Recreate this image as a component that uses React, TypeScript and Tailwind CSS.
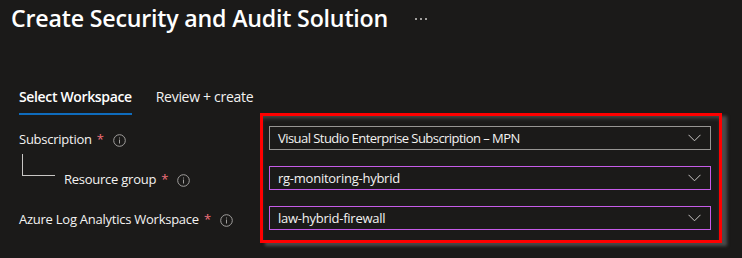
import React from 'react';

const fontStack = { fontFamily: '"Open Sans", "Noto Sans", sans-serif' };

const InfoIcon = () => (
    <svg width="13" height="13" viewBox="0 0 13 13" className="shrink-0">
        <circle cx="6.5" cy="6.5" r="5.8" fill="none" stroke="#a19f9d" strokeWidth="1" />
        <rect x="6" y="5.5" width="1" height="4" fill="#a19f9d" />
        <rect x="6" y="3.5" width="1" height="1" fill="#a19f9d" />
    </svg>
);

const Chevron = () => (
    <svg width="13" height="8" viewBox="0 0 13 8" className="shrink-0">
        <path d="M0.5 0.8 L6.5 6.8 L12.5 0.8" fill="none" stroke="#c8c6c4" strokeWidth="1" />
    </svg>
);

const Required = () => <span className="text-[#f1707b] ml-[5px]">*</span>;

const Dropdown = ({ value, active, tight }: { value: string; active?: boolean; tight?: boolean }) => (
    <div
        className={`flex items-center justify-between h-[24px] pl-[8px] pr-[9px] border ${
            active ? 'border-[#c55ce8]' : 'border-[#979593]'
        }`}
    >
        <span className={`text-[13px] text-[#f3f2f1] leading-none ${tight ? 'tracking-[-0.55px]' : 'tracking-[-0.25px]'}`}>
            {value}
        </span>
        <Chevron />
    </div>
);

export default function App() {
    return (
        <div className="w-[742px] h-[258px] bg-[#1b1a19] text-[#f3f2f1] overflow-hidden" style={fontStack}>
            {/* Header */}
            <div className="flex items-center pl-[11px] pt-[2px] h-[34px]">
                <h1 className="text-[23.2px] font-semibold leading-[32px] tracking-[-0.2px] text-white">
                    Create Security and Audit Solution
                </h1>
                <div className="flex gap-[3px] ml-[27px] mt-[2px]">
                    <span className="w-[2px] h-[2px] bg-[#a19f9d]" />
                    <span className="w-[2px] h-[2px] bg-[#a19f9d]" />
                    <span className="w-[2px] h-[2px] bg-[#a19f9d]" />
                </div>
            </div>

            {/* Tabs */}
            <div className="flex gap-[24px] pl-[19px] mt-[53px]">
                <div className="flex flex-col">
                    <span className="text-[14px] font-semibold leading-[20px] tracking-[-0.35px] text-white">Select Workspace</span>
                    <span className="mt-[6px] h-[2px] bg-[#0f6cbd]" />
                </div>
                <span className="text-[14px] leading-[20px] tracking-[-0.3px] text-[#f3f2f1]">Review + create</span>
            </div>

            {/* Form */}
            <div className="flex mt-[-2px]">
                <div className="w-[260px] flex flex-col gap-[16px] pt-[15px] pl-[19px] text-[13px] tracking-[-0.25px]">
                    <div className="h-[24px] flex items-center">
                        <span>Subscription</span>
                        <Required />
                        <span className="ml-[9px]"><InfoIcon /></span>
                    </div>
                    <div className="h-[24px] flex items-center relative">
                        <div className="absolute left-[3px] top-[-14px] w-[33px] h-[22px] border-l border-b border-[#c8c6c4]" />
                        <span className="ml-[45px]">Resource group</span>
                        <Required />
                        <span className="ml-[9px]"><InfoIcon /></span>
                    </div>
                    <div className="h-[24px] flex items-center">
                        <span>Azure Log Analytics Workspace</span>
                        <Required />
                        <span className="ml-[9px]"><InfoIcon /></span>
                    </div>
                </div>
                <div className="w-[462px] border-[3px] border-[#ff0000] pt-[10px] pb-[10px] pl-[6px] pr-[8px] flex flex-col gap-[16px] shadow-[inset_0_4px_4px_-2px_rgba(110,110,110,0.6),5px_3px_3px_rgba(80,80,80,0.9)]">
                    <Dropdown value="Visual Studio Enterprise Subscription – MPN" tight />
                    <Dropdown value="rg-monitoring-hybrid" active />
                    <Dropdown value="law-hybrid-firewall" active />
                </div>
            </div>
        </div>
    );
}
